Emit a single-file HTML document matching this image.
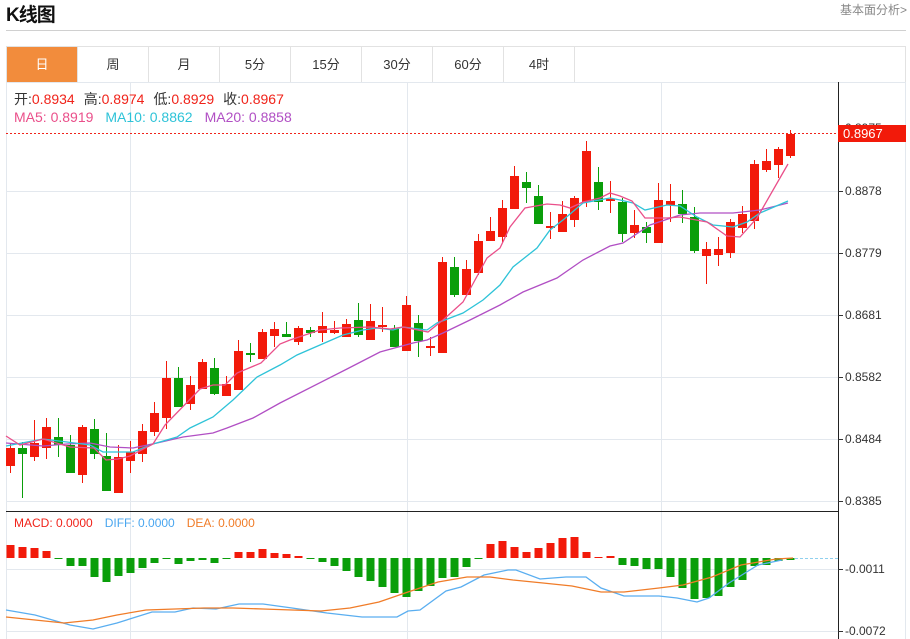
<!DOCTYPE html>
<html><head><meta charset="utf-8"><style>
body{margin:0;width:910px;height:639px;overflow:hidden;background:#fff;font-family:"Liberation Sans","Noto Sans CJK SC",sans-serif;position:relative}
.t{position:absolute;left:6px;top:0;font-size:19px;font-weight:bold;color:#111;letter-spacing:-1px}
.r{position:absolute;right:3px;top:1px;font-size:12px;color:#888}
.hl{position:absolute;left:6px;top:30px;width:900px;height:1px;background:#d0d0d0}
.tabs{position:absolute;left:6px;top:46px;width:898px;height:35px;border:1px solid #e2e2e2;display:flex}
.tabs div{width:70px;border-right:1px solid #e2e2e2;text-align:center;line-height:35px;font-size:13px;color:#333}
.tabs div.a{background:#f28c3c;color:#fff}
</style></head><body>
<div class="t">K线图</div>
<div class="r">基本面分析&gt;</div>
<div class="hl"></div>
<div class="tabs"><div class="a">日</div><div>周</div><div>月</div><div>5分</div><div>15分</div><div>30分</div><div>60分</div><div>4时</div></div>
<svg style="position:absolute;left:0;top:0" width="910" height="639" font-family="Liberation Sans, sans-serif">
<g stroke="#e3e8ee" stroke-width="1">
<path d="M6.5 82V639M130.5 82V639M407.5 82V639M661.5 82V639M905.5 82V639"/>
<path d="M6 191.5H838M6 253.5H838M6 315.5H838M6 377.5H838M6 439.5H838M6 501.5H838M6 569.5H838M6 631.5H838M6 82.5H906"/>
</g>
<path d="M838.5 82V639M6 511.5H839" stroke="#222" stroke-width="1"/>
<g stroke="#333"><path d="M838 191.5h5M838 253.5h5M838 315.5h5M838 377.5h5M838 439.5h5M838 501.5h5M838 569.5h5M838 631.5h5"/></g>
<g font-size="12" fill="#333">
<text x="845" y="132">0.8975</text><text x="845" y="195">0.8878</text><text x="845" y="257">0.8779</text><text x="845" y="319">0.8681</text><text x="845" y="381">0.8582</text><text x="845" y="443">0.8484</text><text x="845" y="505">0.8385</text>
<text x="845" y="573">-0.0011</text><text x="845" y="635">-0.0072</text>
</g>
<g font-size="14">
<text x="14" y="104"><tspan fill="#333">开:</tspan><tspan fill="#f0231a">0.8934</tspan><tspan fill="#333" dx="9">高:</tspan><tspan fill="#f0231a">0.8974</tspan><tspan fill="#333" dx="9">低:</tspan><tspan fill="#f0231a">0.8929</tspan><tspan fill="#333" dx="9">收:</tspan><tspan fill="#f0231a">0.8967</tspan></text>
<text x="14" y="122"><tspan fill="#ea4f8a">MA5: 0.8919</tspan><tspan fill="#2ec3d8" dx="12">MA10: 0.8862</tspan><tspan fill="#b14fc4" dx="12">MA20: 0.8858</tspan></text>
</g>
<g font-size="12">
<text x="14" y="527"><tspan fill="#f0231a">MACD: 0.0000</tspan><tspan fill="#4aa6ef" dx="12">DIFF: 0.0000</tspan><tspan fill="#f07c28" dx="12">DEA: 0.0000</tspan></text>
</g>
<path d="M6 133.5H838" stroke="#f0231a" stroke-dasharray="2,2"/>
<rect x="838" y="125" width="68" height="17" fill="#f21a0a"/>
<text x="843" y="138" font-size="13" fill="#fff">0.8967</text>
<g stroke="#f21a0a" fill="none">
<path stroke-width="1" d="M10.5 444V473M34.5 420V461M46.5 418V459M82.5 425V483M118.5 445V493M130.5 441V473M142.5 424V462M154.5 402V436M166.5 361V429M190.5 376V410M202.5 359V389M226.5 376V396M238.5 340V390M262.5 329V359M274.5 322V347M298.5 326V345M322.5 312V342M334.5 321V334M346.5 319V337M370.5 304V340M382.5 307V332M406.5 296V351M430.5 337V356M442.5 257V353M466.5 260V295M478.5 234V275M490.5 217V241M502.5 200V243M514.5 166V209M550.5 212V239M562.5 201V232M574.5 196V227M586.5 141V207M610.5 181V213M634.5 210V238M658.5 183V243M670.5 184V222M706.5 242V284M718.5 237V266M730.5 219V258M742.5 206V233M754.5 160V229M766.5 149V172M778.5 147V178M790.5 130V158"/>
<path stroke-width="9" d="M10.5 448V466M34.5 443V457M46.5 427V448M82.5 427V475M118.5 457V493M130.5 452V461M142.5 431V454M154.5 413V432M166.5 378V418M190.5 385V404M202.5 362V389M226.5 384V396M238.5 351V390M262.5 332V359M274.5 329V336M298.5 328V342M322.5 326V333M334.5 330V333M346.5 324V337M370.5 321V340M382.5 325V327M406.5 305V351M430.5 346V348M442.5 262V353M466.5 269V295M478.5 241V273M490.5 231V241M502.5 208V237M514.5 176V209M550.5 226V228M562.5 214V232M574.5 198V220M586.5 151V202M610.5 199V201M634.5 225V233M658.5 200V243M670.5 201V205M706.5 249V256M718.5 249V255M730.5 222V253M742.5 214V228M754.5 164V221M766.5 161V170M778.5 149V165M790.5 134V156"/>
</g>
<g stroke="#0a9e0a" fill="none">
<path stroke-width="1" d="M22.5 442V498M58.5 418V457M70.5 435V473M94.5 419V459M106.5 433V491M178.5 367V407M214.5 358V395M250.5 343V362M286.5 322V337M310.5 327V337M358.5 303V337M394.5 325V347M418.5 315V357M454.5 257V297M526.5 172V203M538.5 185V224M598.5 167V210M622.5 198V242M646.5 222V243M682.5 190V223M694.5 207V253"/>
<path stroke-width="9" d="M22.5 448V454M58.5 437V445M70.5 445V473M94.5 429V454M106.5 456V491M178.5 378V407M214.5 368V394M250.5 353V355M286.5 334V337M310.5 330V333M358.5 320V335M394.5 329V347M418.5 323V341M454.5 267V295M526.5 182V188M538.5 196V224M598.5 182V202M622.5 202V234M646.5 227V233M682.5 204V214M694.5 217V251"/>
</g>
<g fill="none" stroke-width="1.3">
<polyline stroke="#b14fc4" points="6,443 43,446 67,444 90,443 110,447 133,448 157,443 183,437 213,433 227,428 253,418 280,403 347,369 380,352 413,343 427,340 443,333 470,320 500,305 523,292 557,278 583,260 610,246 623,243 650,225 680,215 700,213 733,213 760,210 788,203"/>
<polyline stroke="#2ec3d8" points="6,446 43,439 67,442 90,445 103,452 133,452 153,444 177,437 190,428 213,417 233,400 257,377 280,365 297,355 320,345 343,335 363,330 377,328 393,330 403,327 427,330 437,323 463,313 483,300 500,285 513,267 537,248 550,230 563,220 583,203 610,198 620,200 633,203 645,210 667,205 680,206 697,217 713,225 733,227 747,222 760,213 788,201"/>
<polyline stroke="#ea4f8a" points="6,436 20,445 43,439 70,447 94,448 106,460 118,459 130,456 153,444 165,425 200,389 213,385 225,385 237,373 261,363 280,344 290,340 320,330 340,328 370,327 390,329 403,327 428,332 443,320 463,302 487,258 500,248 510,227 525,208 547,204 560,205 570,208 583,202 600,198 610,193 620,196 632,201 645,218 667,218 680,217 707,222 727,236 740,237 757,218 788,164"/>
</g>
<path d="M790 558.5H838" stroke="#8fd0ee" stroke-dasharray="3,2"/>
<path stroke="#f21a0a" stroke-width="8" d="M10.5 545V558M22.5 547V558M34.5 548V558M46.5 551V558M238.5 552V558M250.5 552V558M262.5 549V558M274.5 553V558M286.5 554V558M298.5 556V558M490.5 544V558M502.5 541V558M514.5 547V558M526.5 552V558M538.5 548V558M550.5 543V558M562.5 538V558M574.5 537V558M586.5 552V558M598.5 557V558M610.5 556V558"/>
<path stroke="#0a9e0a" stroke-width="8" d="M58.5 558V559M70.5 558V566M82.5 558V566M94.5 558V577M106.5 558V582M118.5 558V576M130.5 558V573M142.5 558V568M154.5 558V563M166.5 558V559M178.5 558V564M190.5 558V561M202.5 558V560M214.5 558V563M226.5 558V559M310.5 558V559M322.5 558V562M334.5 558V566M346.5 558V571M358.5 558V577M370.5 558V581M382.5 558V587M394.5 558V593M406.5 558V597M418.5 558V591M430.5 558V586M442.5 558V578M454.5 558V577M466.5 558V567M478.5 558V559M622.5 558V565M634.5 558V566M646.5 558V569M658.5 558V569M670.5 558V577M682.5 558V588M694.5 558V599M706.5 558V598M718.5 558V596M730.5 558V587M742.5 558V580M754.5 558V566M766.5 558V565M778.5 558V561M790.5 558V560"/>
<g fill="none" stroke-width="1.3">
<polyline stroke="#5aaef0" points="6,610 35,615 70,625 93,629 117,623 152,612 175,612 193,608 216,609 239,604 263,604 292,608 327,613 362,617 397,617 408,611 420,610 446,591 461,587 484,575 508,570 516,570 540,579 566,577 586,577 601,588 624,596 659,596 677,598 697,602 709,598 729,583 758,565 782,560"/>
<polyline stroke="#f07c28" points="6,617 35,620 64,623 93,620 117,615 146,610 175,609 204,608 233,608 263,609 292,610 321,611 350,608 379,602 408,592 438,582 467,577 490,577 513,580 543,583 572,586 601,592 624,592 659,588 683,585 712,577 741,565 776,559 793,558"/>
</g>
</svg>
</body></html>
